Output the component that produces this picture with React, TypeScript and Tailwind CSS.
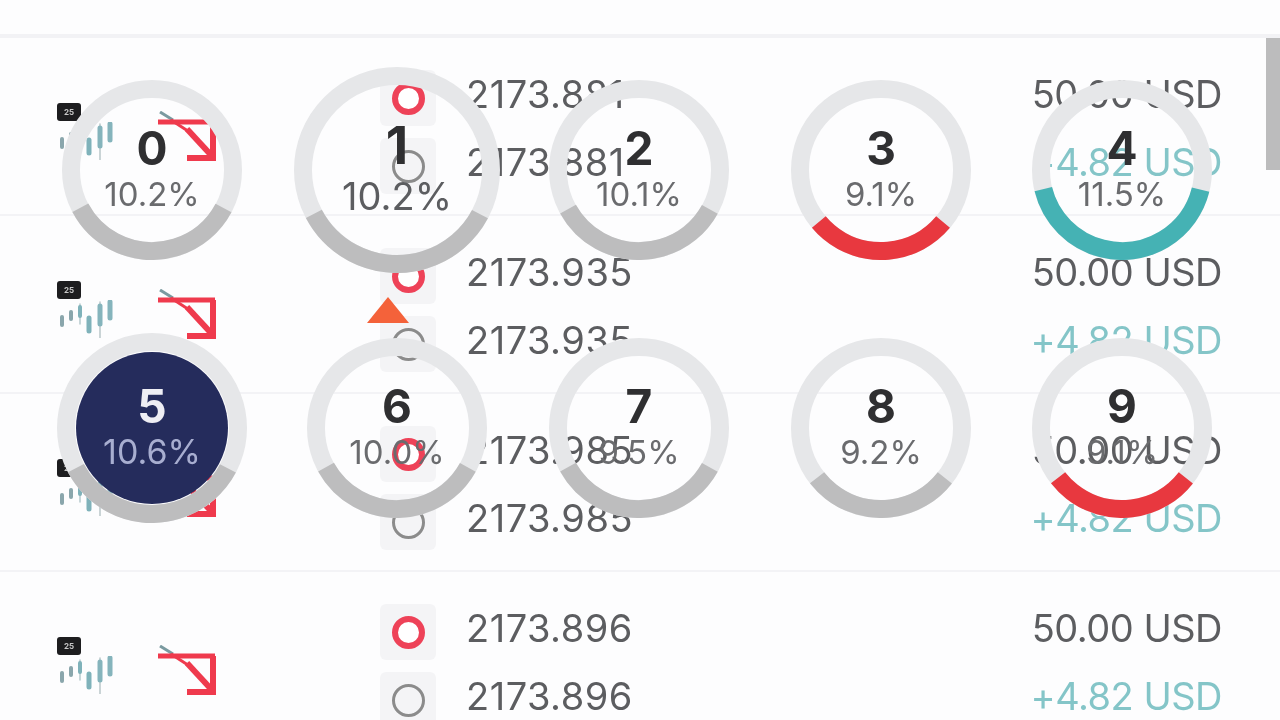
const rows = [
  { price: "2173.881" },
  { price: "2173.935" },
  { price: "2173.985" },
  { price: "2173.896" },
];

const dials = [
  { n: "0", pct: "10.2%", half: 62, arc: "#bdbdbe", size: 180 },
  { n: "1", pct: "10.2%", half: 62, arc: "#bdbdbe", size: 206, big: true },
  { n: "2", pct: "10.1%", half: 61, arc: "#bdbdbe", size: 180 },
  { n: "3", pct: "9.1%", half: 50, arc: "#e8383f", size: 180 },
  { n: "4", pct: "11.5%", half: 76, arc: "#45b2b4", size: 180 },
  { n: "5", pct: "10.6%", half: 62, arc: "#bdbdbe", size: 190, active: true },
  { n: "6", pct: "10.0%", half: 61, arc: "#bdbdbe", size: 180 },
  { n: "7", pct: "9.5%", half: 61, arc: "#bdbdbe", size: 180 },
  { n: "8", pct: "9.2%", half: 52, arc: "#bdbdbe", size: 180 },
  { n: "9", pct: "9.1%", half: 52, arc: "#e8383f", size: 180 },
];

function CandleIcon() {
  return (
    <div className="flex w-[56px] flex-col items-start">
      <div className="flex h-[18px] w-[24px] items-center justify-center rounded-[3px] bg-[#1d1d1f] text-[8px] font-bold leading-none text-[#c8c8c8]">
        25
      </div>
      <svg width="56" height="38" viewBox="0 0 56 38" className="mt-[1px]">
        <g strokeLinecap="round" fill="none">
          <path d="M5 17v8" stroke="#8aa6ac" strokeWidth="4" />
          <path d="M14 12v7" stroke="#8aa6ac" strokeWidth="4" />
          <path d="M23 4v20" stroke="#b4c8cc" strokeWidth="1.5" />
          <path d="M23 7v9" stroke="#7fb2ba" strokeWidth="4" />
          <path d="M32 18v13" stroke="#7fb2ba" strokeWidth="5" />
          <path d="M43 2v36" stroke="#b9c6c9" strokeWidth="1.5" />
          <path d="M43 6v18" stroke="#85b4bc" strokeWidth="5" />
          <path d="M53 2v16" stroke="#85b4bc" strokeWidth="5" />
        </g>
      </svg>
    </div>
  );
}

function ArrowIcon() {
  return (
    <svg width="60" height="52" viewBox="0 0 60 52" fill="none">
      <path d="M3 1l13 8" stroke="#7a9aa0" strokeWidth="3" />
      <path d="M1 11h57" stroke="#ef3a4d" strokeWidth="5" />
      <path d="M14 9l20 13" stroke="#ef3a4d" strokeWidth="3" />
      <path d="M30 18l24 26" stroke="#ef3a4d" strokeWidth="6" />
      <path d="M30 47h26V11" stroke="#ef3a4d" strokeWidth="6" />
    </svg>
  );
}

function Dot({ active }: { active?: boolean }) {
  return (
    <div className="flex h-[56px] w-[56px] items-center justify-center rounded-[6px] bg-[#f4f4f6]">
      <div
        className={
          active
            ? "h-[33px] w-[33px] rounded-full border-[6px] border-[#ee4258] bg-white"
            : "h-[33px] w-[33px] rounded-full border-[3px] border-[#8b8b8b] bg-transparent"
        }
      />
    </div>
  );
}

function Row({ price, first }: { price: string; first?: boolean }) {
  return (
    <div className={first ? "flex h-[178px] items-start border-b-2 border-[#f3f3f6] pl-[57px] pr-[58px] pt-[32px]" : "flex h-[178px] items-start border-b-2 border-[#f3f3f6] pl-[57px] pr-[58px] pt-[32px]"}>
      <div className="mt-[33px] w-[100px]">
        <CandleIcon />
      </div>
      <div className="mt-[41px] w-[223px]">
        <ArrowIcon />
      </div>
      <div className="flex flex-col gap-[12px]">
        <Dot active />
        <Dot />
      </div>
      <div className="ml-[30px] flex flex-col gap-[20px] text-[38px] leading-[48px] tracking-[0.5px] text-[#5c5d60]">
        <span>{price}</span>
        <span>{price}</span>
      </div>
      <div className="ml-auto flex flex-col items-end gap-[20px] text-[38px] leading-[48px] tracking-[-0.5px] text-[#5c5d60]">
        <span>50.00 USD</span>
        <span className="text-[#84c5c8]">+4.82 USD</span>
      </div>
    </div>
  );
}

function Dial({ n, pct, half, arc, size, big, active }: (typeof dials)[number] & { big?: boolean; active?: boolean }) {
  const stroke = 18;
  const r = (size - stroke) / 2;
  const c = 2 * Math.PI * r;
  const len = (half * 2 * c) / 360;
  return (
    <div className="relative flex items-center justify-center" style={{ width: size, height: size }}>
      <svg width={size} height={size} className="absolute inset-0">
        <circle cx={size / 2} cy={size / 2} r={r} fill="none" stroke="#e6e7e9" strokeWidth={stroke} />
        <circle
          cx={size / 2}
          cy={size / 2}
          r={r}
          fill="none"
          stroke={arc}
          strokeWidth={stroke}
          strokeDasharray={`${len} ${c}`}
          transform={`rotate(${90 - half} ${size / 2} ${size / 2})`}
        />
      </svg>
      {active && <div className="absolute h-[152px] w-[152px] rounded-full bg-[#252c5c]" />}
      <div className="relative flex flex-col items-center">
        <span className={big ? "text-[52px] font-bold leading-[52px] text-[#2f2f31]" : active ? "text-[46px] font-bold leading-[48px] text-[#eeeef4]" : "text-[46px] font-bold leading-[48px] text-[#2f2f31]"}>
          {n}
        </span>
        <span className={big ? "text-[38px] leading-[48px] text-[#5c5d60]" : active ? "text-[34px] leading-[44px] text-[#a8aed0]" : "text-[33px] leading-[44px] text-[#6a6b6e]"}>
          {pct}
        </span>
      </div>
    </div>
  );
}

export default function App() {
  return (
    <div className="relative h-[720px] w-[1280px] overflow-hidden bg-[#fdfdfe] font-['Inter',sans-serif] blur-[0.7px]">
      <div className="h-[38px] border-b-4 border-[#f2f2f5]" />
      {rows.map((row, i) => (
        <Row key={row.price} price={row.price} first={i === 0} />
      ))}
      {/* scrollbar */}
      <div className="absolute right-0 top-[38px] h-[132px] w-[14px] bg-[#bcbcbd]" />
      {/* orange marker */}
      <div className="absolute left-[367px] top-[297px] h-0 w-0 border-x-[21px] border-b-[26px] border-x-transparent border-b-[#f4623a]" />
      {/* percent dials over the table */}
      <div className="absolute left-[31px] top-[41px] grid grid-cols-[242px_248px_236px_248px_234px] grid-rows-[258px_258px] place-items-center">
        {dials.map((d) => (
          <Dial key={d.n} {...d} />
        ))}
      </div>
    </div>
  );
}
